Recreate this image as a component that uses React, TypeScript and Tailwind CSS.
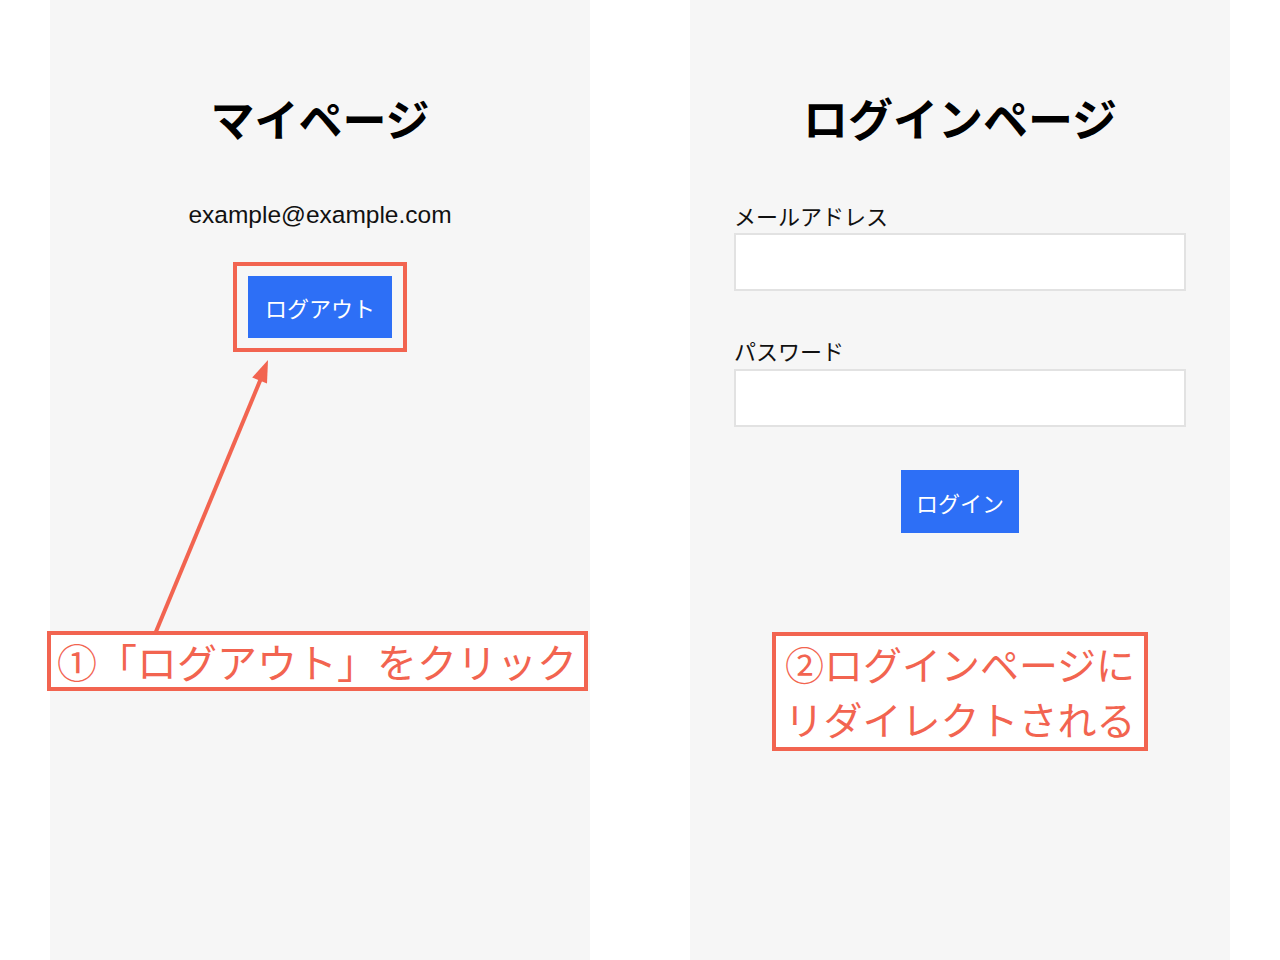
import React from 'react';

const jp = { fontFamily: '"Noto Sans CJK JP", "Noto Sans", sans-serif' };

function MyPage() {
  return (
    <div className="relative w-[540px] h-[960px] bg-[#f6f6f6] flex flex-col items-center pt-[91px]">
      <h1 className="text-[44px] font-bold leading-[54px] text-black" style={jp}>マイページ</h1>
      <p
        className="mt-[55px] text-[24.5px] leading-[30px] text-[#111]"
        style={{ fontFamily: '"Liberation Sans", Arial, sans-serif' }}
      >
        example@example.com
      </p>
      {/* highlighted logout button */}
      <div className="mt-[32px] border-4 border-[#f26450] px-[11px] py-[10px]">
        <button
          className="w-[144px] h-[62px] bg-[#2d6ff6] text-white text-[22px] leading-none"
          style={jp}
        >
          ログアウト
        </button>
      </div>
      <div
        className="mt-[279px] -ml-[6px] w-[541px] h-[60px] border-4 border-[#f26450] bg-white flex items-center justify-center text-[40px] text-[#f26450] leading-none whitespace-nowrap"
        style={jp}
      >
        ①「ログアウト」をクリック
      </div>
      {/* arrow overlay */}
      <svg className="absolute left-0 top-0 pointer-events-none" width="540" height="960" viewBox="0 0 540 960">
        <line x1="105" y1="634" x2="212" y2="376" stroke="#f26450" strokeWidth="4" />
        <polygon points="218,360 202.2,377.4 217,383.4" fill="#f26450" />
      </svg>
    </div>
  );
}

function LoginPage() {
  return (
    <div className="w-[540px] h-[960px] bg-[#f6f6f6] flex flex-col pt-[91px]" style={jp}>
      <h1 className="text-center text-[45px] font-bold leading-[54px] text-black">ログインページ</h1>
      <div className="px-[44px] mt-[55px] flex flex-col">
        <label className="text-[22px] leading-[30px] text-[#111]">メールアドレス</label>
        <input type="email" className="mt-[3px] h-[58px] w-full bg-white border-2 border-[#e2e2e2] outline-none" />
        <label className="mt-[44px] text-[22px] leading-[30px] text-[#111]">パスワード</label>
        <input type="password" className="mt-[4px] h-[58px] w-full bg-white border-2 border-[#e2e2e2] outline-none" />
      </div>
      <div className="mt-[43px] flex justify-center">
        <button className="w-[118px] h-[63px] bg-[#2d6ff6] text-white text-[22px] leading-none">ログイン</button>
      </div>
      <div className="mt-[99px] flex justify-center">
        <div className="w-[376px] h-[119px] border-4 border-[#f26450] bg-white text-[#f26450] text-[39px] leading-[55px] text-center whitespace-nowrap">
          ②ログインページに
          <br />
          リダイレクトされる
        </div>
      </div>
    </div>
  );
}

export default function App() {
  return (
    <div className="w-[1280px] h-[960px] bg-white flex gap-[100px] pl-[50px] overflow-hidden">
      <MyPage />
      <LoginPage />
    </div>
  );
}
